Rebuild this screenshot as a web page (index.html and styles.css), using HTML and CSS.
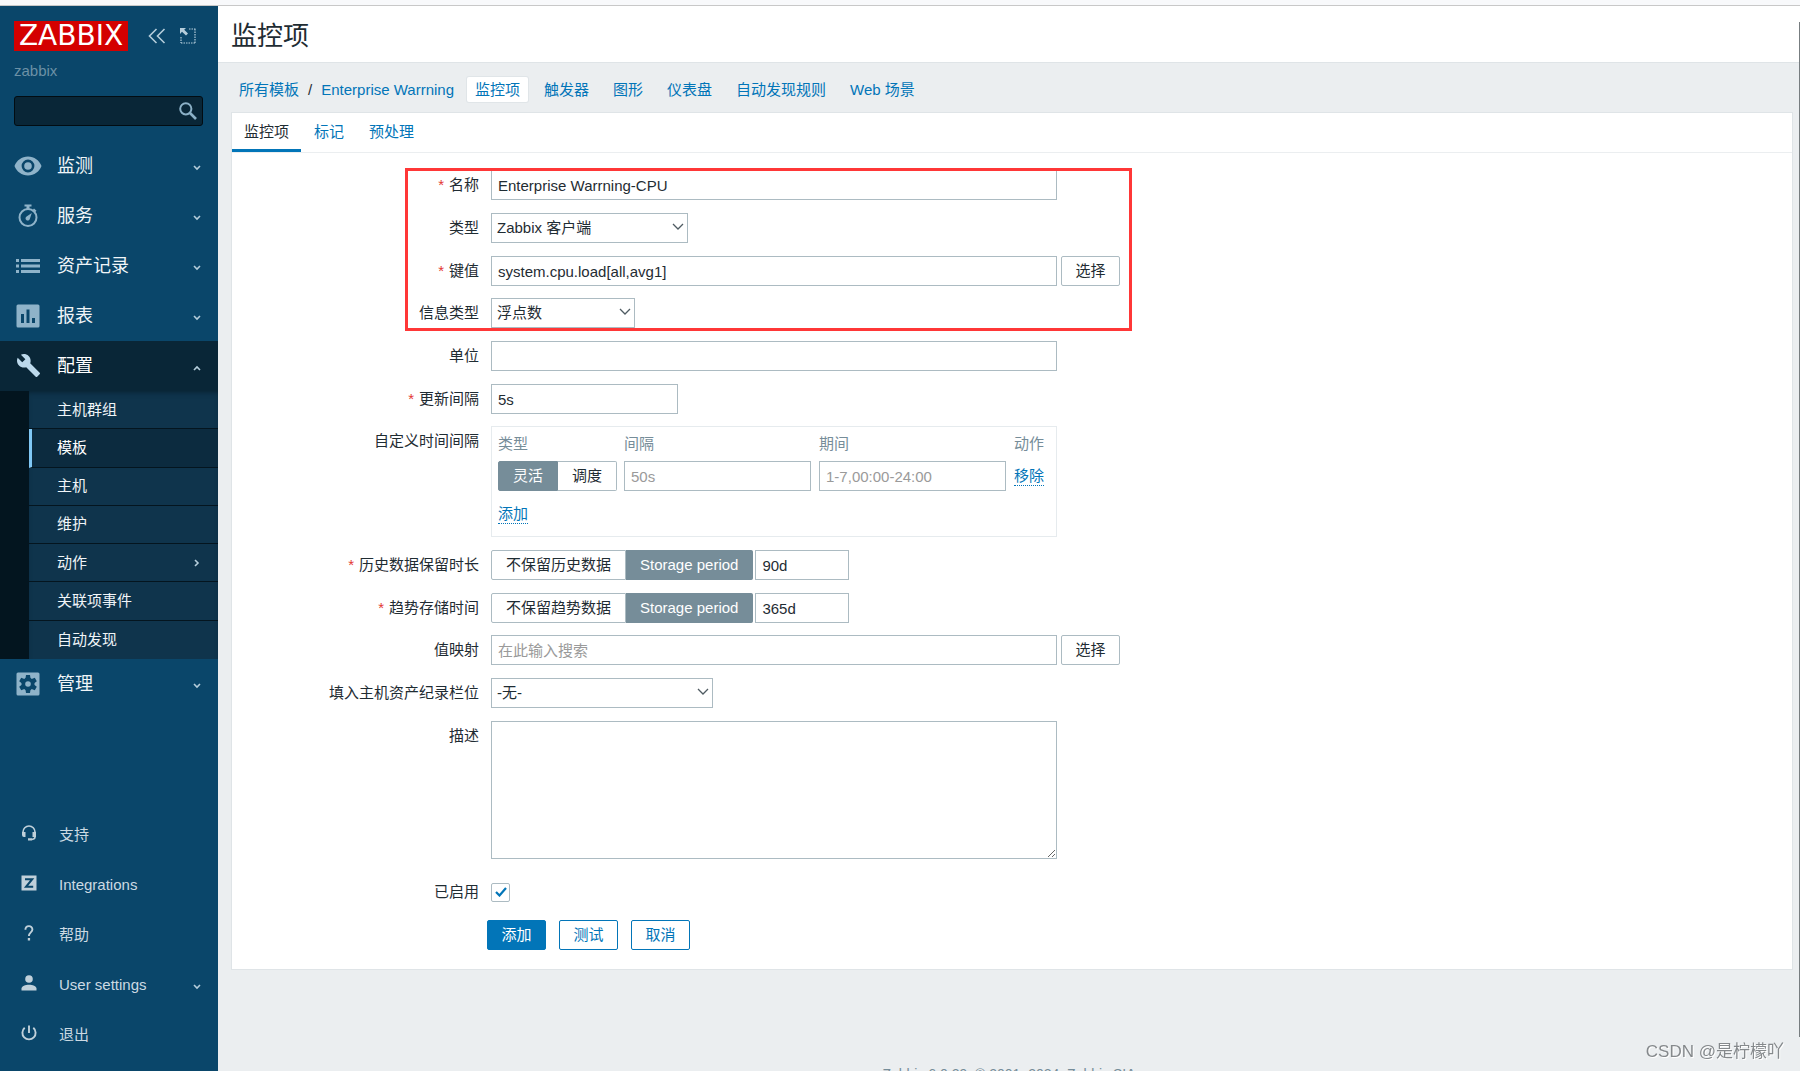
FILE: index.html
```html
<!DOCTYPE html>
<html lang="zh-CN">
<head>
<meta charset="utf-8">
<title>监控项</title>
<link rel="stylesheet" href="styles.css">
</head>
<body>
<svg class="sprite" aria-hidden="true">
  <symbol id="chev" viewBox="0 0 8 6"><path d="M1 1l3 3 3-3" fill="none" stroke="currentColor" stroke-width="1.6"/></symbol>
</svg>
<aside class="sidebar">
  <div class="brand">
    <a class="logo" href="#">ZABBIX</a>
    <button class="tool" type="button" aria-label="收起侧栏"><svg width="18" height="16" viewBox="0 0 18 16"><path d="M8.500 1l-7 7 7 7M16.500 1l-7 7 7 7" fill="none" stroke="currentColor" stroke-width="1.600"/></svg></button>
    <button class="tool tool-hide" type="button" aria-label="隐藏侧栏"><svg width="16" height="16" viewBox="0 0 16 16"><path d="M9 1h6.500M15 1v14M1 15h14M1 9v6" fill="none" stroke="currentColor" stroke-width="1.200" stroke-dasharray="1.500 1"/><path d="M0 0h6L4.200 1.800 8 5.600 6 7.600 2 3.800 0 6z" fill="currentColor"/></svg></button>
  </div>
  <div class="server">zabbix</div>
  <form class="search">
    <input type="text" aria-label="搜索">
    <button type="button" aria-label="搜索"><svg width="18" height="18" viewBox="0 0 18 18"><circle cx="6.800" cy="6.800" r="5.600" fill="none" stroke="currentColor" stroke-width="2"/><path d="M11 11l6 6" stroke="currentColor" stroke-width="2.600"/></svg></button>
  </form>
  <nav class="menu">
    <a href="#"><span class="ico"><svg width="28" height="20" viewBox="0 0 28 20"><path fill-rule="evenodd" d="M14 0.500C7.800 0.500 2.500 4.400 0.500 10c2 5.600 7.300 9.500 13.500 9.500S25.500 15.600 27.500 10C25.500 4.400 20.200 0.500 14 0.500zM14 16.400A6.400 6.400 0 1 1 14 3.600a6.400 6.400 0 0 1 0 12.800zM14 6.200a3.800 3.800 0 1 0 0 7.600 3.800 3.800 0 0 0 0-7.600z" fill="currentColor"/></svg></span>监测<svg class="chev"><use href="#chev"/></svg></a>
    <a href="#"><span class="ico"><svg width="20" height="24" viewBox="0 0 20 24"><circle cx="10" cy="13.500" r="8.500" fill="none" stroke="currentColor" stroke-width="2"/><path d="M6.500 0.500h7v2h-2v3h-3v-3h-2zM16 4.500l2.500 2.200-1.500 1.500-2.300-2.200zM13.800 9l-2 6a2.200 2.200 0 1 1-3.200-2.600z" fill="currentColor"/></svg></span>服务<svg class="chev"><use href="#chev"/></svg></a>
    <a href="#"><span class="ico"><svg width="24" height="14" viewBox="0 0 24 14"><path d="M0 0h3v3H0zM5 0h19v3H5zM0 5.500h3v3H0zM5 5.500h19v3H5zM0 11h3v3H0zM5 11h19v3H5z" fill="currentColor"/></svg></span>资产记录<svg class="chev"><use href="#chev"/></svg></a>
    <a href="#"><span class="ico"><svg width="24" height="24" viewBox="0 0 24 24"><path fill-rule="evenodd" d="M2 0.500h20a1.500 1.500 0 0 1 1.500 1.500v20a1.500 1.500 0 0 1-1.500 1.500H2A1.500 1.500 0 0 1 0.500 22V2A1.500 1.500 0 0 1 2 0.500zM5 10v9h3v-9zM10.500 5.500V19h3V5.500zM16 14v5h3v-5z" fill="currentColor"/></svg></span>报表<svg class="chev"><use href="#chev"/></svg></a>
    <a class="open" href="#"><span class="ico"><svg width="24" height="24" viewBox="0 1 23 23"><path d="M22.700 19l-9.100-9.100c.9-2.300.4-5-1.500-6.900-2-2-5-2.400-7.400-1.300L9 6 6 9 1.600 4.700C.4 7.100.9 10.100 2.900 12.100c1.900 1.900 4.600 2.400 6.900 1.500l9.100 9.100c.4.4 1 .4 1.400 0l2.300-2.300c.5-.4.5-1.100.1-1.400z" fill="currentColor"/></svg></span>配置<svg class="chev up"><use href="#chev"/></svg></a>
    <div class="submenu">
      <a href="#">主机群组</a>
      <a class="current" href="#">模板</a>
      <a href="#">主机</a>
      <a href="#">维护</a>
      <a href="#">动作<svg class="chev right"><use href="#chev"/></svg></a>
      <a href="#">关联项事件</a>
      <a href="#">自动发现</a>
    </div>
    <a href="#"><span class="ico"><svg width="24" height="24" viewBox="0 0 24 24"><rect x="0.500" y="0.500" width="23" height="23" rx="1.500" fill="currentColor"/><g fill="#0a466a"><circle cx="12" cy="12" r="6.500"/><path id="tooth" d="M10 3h4l.6 4H9.400zM10 21h4l.6-4H9.400z"/><use href="#tooth" transform="rotate(60 12 12)"/><use href="#tooth" transform="rotate(120 12 12)"/></g><circle cx="12" cy="12" r="2.800" fill="currentColor"/></svg></span>管理<svg class="chev"><use href="#chev"/></svg></a>
  </nav>
  <nav class="menu user-menu">
    <a href="#"><span class="ico"><svg width="16" height="16" viewBox="0 0 16 16"><path d="M2 9V7a6 6 0 0 1 12 0v5q0 2-3 2.500" fill="none" stroke="currentColor" stroke-width="1.600"/><path d="M1 7h3.500v5H3a2 2 0 0 1-2-2zM15 7h-3.500v5H15zM7 13.300h4v2.200H7z" fill="currentColor"/></svg></span>支持</a>
    <a href="#"><span class="ico"><svg width="16" height="16" viewBox="0 0 16 16"><path d="M0.500 0.500h15v15h-15z" fill="currentColor"/><path d="M4 4.200h7.200L5 11.800h7.200" fill="none" stroke="#0a466a" stroke-width="2"/></svg></span>Integrations</a>
    <a href="#"><span class="ico"><svg width="16" height="16" viewBox="0 0 16 16"><path d="M4.400 4.800C4.400 0 11.400 0 11.400 4.400c0 3-3.500 3-3.500 6.600" fill="none" stroke="currentColor" stroke-width="1.900"/><path d="M6.800 13h2.300v2.500H6.800z" fill="currentColor"/></svg></span>帮助</a>
    <a href="#"><span class="ico"><svg width="16" height="16" viewBox="0 0 16 16"><circle cx="8" cy="4" r="3.800" fill="currentColor"/><path d="M0.500 15.500v-2c0-2.500 4-3.800 7.500-3.800s7.500 1.300 7.500 3.800v2z" fill="currentColor"/></svg></span>User settings<svg class="chev"><use href="#chev"/></svg></a>
    <a href="#"><span class="ico"><svg width="16" height="16" viewBox="0 0 16 16"><path d="M3.700 2.800a6.600 6.600 0 1 0 8.600 0M8 0.500v7.500" fill="none" stroke="currentColor" stroke-width="1.900"/></svg></span>退出</a>
  </nav>
</aside>
<div class="page">
  <header><h1>监控项</h1></header>
  <main>
    <nav class="crumbs">
      <a href="#">所有模板</a><span>/</span><a class="template" href="#">Enterprise Warrning</a>
      <a class="obj selected" href="#">监控项</a>
      <a class="obj" href="#">触发器</a>
      <a class="obj" href="#">图形</a>
      <a class="obj" href="#">仪表盘</a>
      <a class="obj" href="#">自动发现规则</a>
      <a class="obj" href="#">Web 场景</a>
    </nav>
    <section class="card">
      <nav class="tabs">
        <a class="active" href="#">监控项</a>
        <a href="#">标记</a>
        <a href="#">预处理</a>
      </nav>
      <form class="item-form">
        <div class="row"><label class="req" for="name">名称</label><input class="wide" id="name" type="text" value="Enterprise Warrning-CPU"></div>
        <div class="row"><label for="type">类型</label><span class="select type"><select id="type"><option>Zabbix 客户端</option></select><svg class="arrow" viewBox="0 0 12 8"><path d="M1 1l5 5 5-5" fill="none" stroke="currentColor" stroke-width="1.300"/></svg></span></div>
        <div class="row"><label class="req" for="key">键值</label><input class="wide" id="key" type="text" value="system.cpu.load[all,avg1]"><button class="pick" type="button">选择</button></div>
        <div class="row"><label for="vtype">信息类型</label><span class="select vtype"><select id="vtype"><option>浮点数</option></select><svg class="arrow" viewBox="0 0 12 8"><path d="M1 1l5 5 5-5" fill="none" stroke="currentColor" stroke-width="1.300"/></svg></span></div>
        <div class="row"><label for="units">单位</label><input class="wide" id="units" type="text"></div>
        <div class="row"><label class="req" for="delay">更新间隔</label><input class="medium" id="delay" type="text" value="5s"></div>
        <div class="row">
          <span class="label">自定义时间间隔</span>
          <div class="intervals">
            <table>
              <thead><tr><th>类型</th><th>间隔</th><th>期间</th><th>动作</th></tr></thead>
              <tbody>
                <tr>
                  <td><span class="seg"><input type="radio" name="itype" id="flex" checked><label for="flex">灵活</label><input type="radio" name="itype" id="sched"><label for="sched">调度</label></span></td>
                  <td><input class="medium" type="text" placeholder="50s" aria-label="间隔"></td>
                  <td><input class="medium" type="text" placeholder="1-7,00:00-24:00" aria-label="期间"></td>
                  <td><button class="link" type="button">移除</button></td>
                </tr>
                <tr><td colspan="4"><button class="link" type="button">添加</button></td></tr>
              </tbody>
            </table>
          </div>
        </div>
        <div class="row"><label class="req" for="history">历史数据保留时长</label><span class="seg"><input type="radio" name="hist" id="h0"><label for="h0">不保留历史数据</label><input type="radio" name="hist" id="h1" checked><label for="h1">Storage period</label></span><input class="short" id="history" type="text" value="90d"></div>
        <div class="row"><label class="req" for="trends">趋势存储时间</label><span class="seg"><input type="radio" name="trend" id="t0"><label for="t0">不保留趋势数据</label><input type="radio" name="trend" id="t1" checked><label for="t1">Storage period</label></span><input class="short" id="trends" type="text" value="365d"></div>
        <div class="row"><label for="vmap">值映射</label><input class="wide" id="vmap" type="text" placeholder="在此输入搜索"><button class="pick" type="button">选择</button></div>
        <div class="row"><label for="inv">填入主机资产纪录栏位</label><span class="select inv"><select id="inv"><option>-无-</option></select><svg class="arrow" viewBox="0 0 12 8"><path d="M1 1l5 5 5-5" fill="none" stroke="currentColor" stroke-width="1.300"/></svg></span></div>
        <div class="row"><label for="desc">描述</label><textarea class="wide" id="desc"></textarea></div>
        <div class="row enabled"><label for="on">已启用</label><span class="check"><input id="on" type="checkbox" checked><svg viewBox="0 0 12 10"><path d="M1 5l3.500 3.500L11 1" fill="none" stroke="#0275b8" stroke-width="2.200"/></svg></span></div>
        <div class="actions"><button class="primary" type="submit">添加</button><button type="button">测试</button><button type="button">取消</button></div>
        <div class="highlight"></div>
      </form>
    </section>
  </main>
  <footer>Zabbix 6.0.29. © 2001–2024, Zabbix SIA</footer>
</div>
<div class="scroll-edge"></div>
<div class="watermark">CSDN @是柠檬吖</div>
</body>
</html>
```
FILE: styles.css
```css
* { box-sizing: border-box; }
html { height: 100%; padding-top: 5px; background: #f8f9fb; }
body {
  margin: 0;
  height: 100%;
  display: flex;
  overflow: hidden;
  border-top: 1px solid #c8c8c8;
  background: #ebeef0;
  color: #1f2c33;
  font: 15px/18px "Liberation Sans", "Noto Sans CJK SC", sans-serif;
}
a { color: #0275b8; text-decoration: none; }
button, input, select, textarea { font: inherit; color: inherit; margin: 0; }
.sprite { position: absolute; width: 0; height: 0; }

/* Sidebar */
.sidebar {
  flex: 0 0 218px;
  min-width: 0;
  display: flex;
  flex-direction: column;
  background: #0a466a;
  padding-bottom: 11px;
}
.brand { display: flex; align-items: center; padding: 15px 14px 0; height: 45px; }
.logo {
  width: 114px;
  height: 30px;
  background: #d40000;
  color: #fff;
  font: 28px/30px "DejaVu Sans", sans-serif;
  text-align: center;
}
.tool { border: 0; background: none; padding: 0; color: #b5cddb; display: flex; margin-left: 20px; }
.tool-hide { margin-left: 14px; }
.server { padding: 11px 14px; height: 45px; color: #6c91a6; }
.search {
  display: flex;
  align-items: center;
  margin: 0 15px 15px 14px;
  height: 30px;
  background: #092637;
  border: 1px solid #020c12;
  border-radius: 3px;
}
.search input { flex: 1; min-width: 0; border: 0; background: none; color: #fff; padding: 0 6px; }
.search button { border: 0; background: none; padding: 0 5px; color: #8bb0c6; display: flex; }
.menu > a {
  display: flex;
  align-items: center;
  height: 50px;
  padding: 0 16px 0 14px;
  color: #f0f5f8;
  font-size: 18px;
}
.ico { width: 28px; margin-right: 15px; display: flex; justify-content: center; color: #8fb3c9; }
.chev { width: 8px; height: 6px; margin: 3px 1px 0 auto; color: #b5cddb; }
.up { transform: rotate(180deg); }
.right { transform: rotate(-90deg); margin-top: 0; }
.menu > .open { background: #092637; color: #fff; }
.open .ico { color: #bcd9ec; }
.submenu {
  display: grid;
  grid-auto-rows: 1fr;
  height: 268px;
  background: #0f344c;
  border-left: 29px solid #03151f;
  box-shadow: inset 0 4px 6px -4px #061a26;
}
.submenu a { display: flex; align-items: center; padding: 0 16px 0 28px; color: #f0f5f8; border-bottom: 1px solid #04151f; }
.submenu a:last-child { border-bottom: 0; }
.submenu .current { background: #0c2b3f; color: #fff; border-left: 3px solid #80c8f5; padding-left: 25px; }
.user-menu { margin-top: auto; }
.user-menu > a { font-size: 15px; color: #ccdae3; }
.user-menu .ico { width: 30px; color: #c0d0da; padding-bottom: 4px; }

/* Page */
.page { flex: 1; min-width: 0; display: flex; flex-direction: column; }
header { background: #fff; border-bottom: 1px solid #dfe4e7; padding: 12px 13px 8px; }
h1 { margin: 0; font-size: 26px; line-height: 36px; font-weight: 400; }
main { padding: 0 7px 0 13px; }
.crumbs { display: flex; align-items: center; padding: 14px 8px 10px; }
.crumbs span { margin: 0 9px; }
.template { margin-right: 13px; }
.obj { padding: 4px 8px 3px; margin-right: 8px; }
.selected { background: #fff; border-radius: 2px; box-shadow: 0 0 0 1px #e0e5e8; }
.card { background: #fff; border: 1px solid #dfe4e7; }
.tabs { display: flex; gap: 1px; border-bottom: 1px solid #ebeef0; }
.tabs a { padding: 10px 12px 11px; }
.tabs .active { color: #1f2c33; box-shadow: inset 0 -3px #0275b8; }

/* Form */
.item-form { position: relative; padding: 17px 0 19px; }
.row { display: flex; margin-top: 13px; }
.row:first-child { margin-top: 0; }
.row:nth-child(3n+4) { margin-top: 12px; }
.row > label, .label { flex: 0 0 247px; margin-right: 12px; padding-top: 6px; text-align: right; }
.req::before { content: "*"; color: #e33734; margin-right: 5px; }
input[type=text], textarea, select {
  height: 30px;
  border: 1px solid #acbbc2;
  border-radius: 0;
  background: #fff;
  padding: 0 6px;
}
::placeholder { color: #9a9a9a; opacity: 1; }
.search input[type=text] { border: 0; background: none; height: 28px; }
input.wide, textarea.wide { width: 566px; }
input.medium { width: 187px; }
input.short { width: 94px; margin-left: 2px; }
textarea { height: 138px; resize: both; display: block; }
.select { position: relative; display: flex; }
.select select { appearance: none; width: 100%; padding: 0 5px; }
.arrow { position: absolute; right: 4px; top: 10px; width: 12px; height: 8px; color: #4f5b62; pointer-events: none; }
.type { width: 197px; }
.vtype { width: 144px; }
.inv { width: 222px; }
.pick, .actions button { width: 59px; height: 30px; padding: 0; background: #fff; border: 1px solid #acbbc2; border-radius: 2px; }
.pick { margin-left: 4px; }
.seg { display: inline-flex; height: 30px; vertical-align: top; }
.seg input { position: absolute; opacity: 0; }
.seg label { border: 1px solid #acbbc2; padding: 5px 14px; white-space: nowrap; border-radius: 2px 0 0 2px; }
.seg label:last-child { border-left: 0; border-radius: 0 2px 2px 0; }
.seg input:checked + label { background: #768d99; border-color: #768d99; color: #fff; }
.intervals { width: 566px; height: 111px; border: 1px solid #e6ebee; padding: 6px; }
.intervals table { border-collapse: collapse; white-space: nowrap; }
.intervals th { text-align: left; font-weight: 400; color: #768d99; padding: 2px 0 8px; }
.intervals td { padding: 0 8px 0 0; height: 30px; vertical-align: middle; }
.intervals td:first-child { padding-right: 7px; }
.intervals td:last-child { padding-right: 0; }
.intervals tr:last-child td { height: 46px; }
.intervals input[type=text] { display: block; }
.link { border: 0; border-bottom: 1px dotted #0275b8; background: none; padding: 0; color: #0275b8; line-height: 18px; white-space: nowrap; }
.row.enabled { margin-top: 18px; }
.check { position: relative; display: flex; align-items: center; height: 30px; }
.check input { appearance: none; width: 19px; height: 19px; border: 1px solid #acbbc2; border-radius: 2px; }
.check svg { position: absolute; left: 4px; width: 12px; height: 10px; pointer-events: none; }
.actions { display: flex; gap: 13px; margin: 13px 0 0 255px; }
.actions button { border-color: #0275b8; color: #0275b8; }
.actions .primary { background: #0275b8; color: #fff; }
.highlight { position: absolute; left: 173px; top: 15px; width: 727px; height: 163px; border: 3px solid #ff3737; pointer-events: none; }
footer { margin-top: 95px; text-align: center; color: #768d99; font-size: 14px; white-space: nowrap; }

.scroll-edge { position: fixed; right: 0; top: 22px; width: 1px; bottom: 34px; background: #777d80; }
.watermark { position: fixed; right: 16px; bottom: 7px; font-size: 17px; line-height: 24px; color: #85898c; text-shadow: 1px 1px #fff; }
```
